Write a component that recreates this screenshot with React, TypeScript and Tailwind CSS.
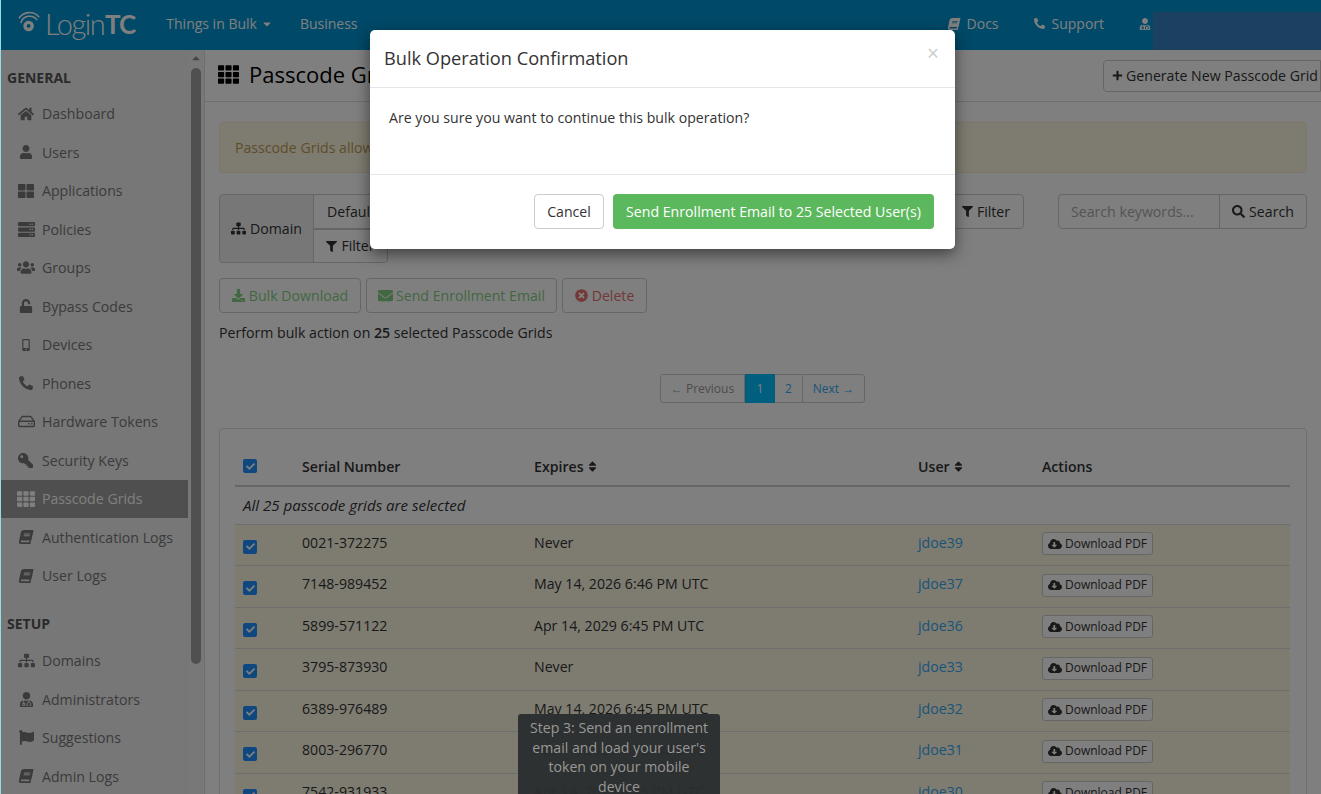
import {
  FaHome, FaUser, FaThLarge, FaServer, FaUsers, FaUnlock, FaMobileAlt, FaPhoneAlt, FaRegHdd, FaKey, FaTh, FaBook,
  FaSitemap, FaUserMd, FaFlag, FaCaretDown, FaCaretUp, FaSort, FaFilter, FaPlus, FaSearch, FaDownload, FaEnvelope,
  FaTimesCircle, FaCloudDownloadAlt, FaCheck,
} from 'react-icons/fa';

const general = [
  { label: 'Dashboard', icon: FaHome, cls: 'text-[16px]' },
  { label: 'Users', icon: FaUser, cls: 'text-[14px]' },
  { label: 'Applications', icon: FaThLarge, cls: 'text-[16px]' },
  { label: 'Policies', icon: FaServer, cls: 'text-[17px]' },
  { label: 'Groups', icon: FaUsers, cls: 'text-[19px]' },
  { label: 'Bypass Codes', icon: FaUnlock, cls: 'text-[14px]' },
  { label: 'Devices', icon: FaMobileAlt, cls: 'text-[12px]' },
  { label: 'Phones', icon: FaPhoneAlt, cls: 'text-[14px]' },
  { label: 'Hardware Tokens', icon: FaRegHdd, cls: 'text-[17px]' },
  { label: 'Security Keys', icon: FaKey, cls: 'text-[15px] -scale-x-100' },
  { label: 'Passcode Grids', icon: FaTh, cls: 'text-[18px]', active: true },
  { label: 'Authentication Logs', icon: FaBook, cls: 'text-[14px] -skew-x-12' },
  { label: 'User Logs', icon: FaBook, cls: 'text-[14px] -skew-x-12' },
];

const setup = [
  { label: 'Domains', icon: FaSitemap, cls: 'text-[17px]' },
  { label: 'Administrators', icon: FaUserMd, cls: 'text-[15px]' },
  { label: 'Suggestions', icon: FaFlag, cls: 'text-[15px]' },
  { label: 'Admin Logs', icon: FaBook, cls: 'text-[14px] -skew-x-12' },
];

const rows = [
  ['0021-372275', 'Never', 'jdoe39'],
  ['7148-989452', 'May 14, 2026 6:46 PM UTC', 'jdoe37'],
  ['5899-571122', 'Apr 14, 2029 6:45 PM UTC', 'jdoe36'],
  ['3795-873930', 'Never', 'jdoe33'],
  ['6389-976489', 'May 14, 2026 6:45 PM UTC', 'jdoe32'],
  ['8003-296770', 'Apr 14, 2029 6:45 PM UTC', 'jdoe31'],
  ['7542-931933', 'Apr 14, 2029 6:45 PM UTC', 'jdoe30'],
];

function Check() {
  return (
    <span className="flex h-[14px] w-[14px] items-center justify-center rounded-[2px] bg-[#1e90ff] text-white">
      <FaCheck className="text-[9px]" />
    </span>
  );
}

function SideItem({ item }: { item: any }) {
  const Icon = item.icon;
  return (
    <div className={`flex h-[38.5px] items-center pl-[16px] ${item.active ? 'bg-[#9e9e9e] text-[#fff]' : 'text-[#777]'}`}>
      <span className={`flex w-[18px] justify-center ${item.cls}`}><Icon /></span>
      <span className="ml-[7px]">{item.label}</span>
    </div>
  );
}

export default function App() {
  return (
    <div className="relative flex h-[794px] flex-col overflow-hidden bg-white font-['Open_Sans',sans-serif] text-[14.15px] text-[#333]">
      <header className="flex h-[50px] shrink-0 items-center bg-[#0092d0] pb-[3px] pl-[18px] text-white">
        <svg viewBox="0 0 26 26" className="h-[26px] w-[25px]" fill="none" stroke="currentColor">
          <circle cx="11" cy="15" r="5.5" fill="currentColor" stroke="none" />
          <circle cx="11" cy="15" r="2" fill="#0092d0" stroke="none" />
          <path d="M3 12 A 9.5 9.5 0 0 1 20 9" strokeWidth="1.6" />
          <path d="M1 7 A 13 13 0 0 1 22 6" strokeWidth="1.6" />
        </svg>
        <span className="ml-[2px] font-['Lato',sans-serif] text-[29px] leading-none font-light tracking-[-1.5px]">Login</span>
        <span className="ml-[1px] font-['Lato',sans-serif] text-[26px] leading-none font-bold tracking-[-1px]">TC</span>
        <span className="ml-[31px] flex items-center gap-1 text-[14px]">Things in Bulk <FaCaretDown className="text-xs" /></span>
        <span className="ml-[27px] text-[14px]">Business</span>
        <span className="ml-[590px] flex items-center gap-[7px] text-[14px]"><FaBook className="-skew-x-12 text-xs" />Docs</span>
        <span className="ml-[35px] flex items-center gap-[7px] text-[14px]"><FaPhoneAlt className="text-[11px]" />Support</span>
        <FaUserMd className="ml-[35px] text-xs" />
        <div className="-mb-[3px] ml-[2px] h-[38px] flex-1 self-end bg-[#3680c0]" />
      </header>

      <div className="flex min-h-0 flex-1">
        <aside className="flex w-[205px] shrink-0 border-r border-[#ddd] bg-[#f0f0f0]">
          <div className="w-[188px] shrink-0 bg-[#eee] pl-px">
            <div className="flex h-[44.5px] items-end pb-[7px] pl-[6px] text-[14px] font-bold text-[#555]">GENERAL</div>
            {general.map((item) => <SideItem key={item.label} item={item} />)}
            <div className="flex h-[46.5px] items-end pb-2 pl-[6px] text-[14px] font-bold text-[#555]">SETUP</div>
            {setup.map((item) => <SideItem key={item.label} item={item} />)}
          </div>
          <div className="flex flex-1 flex-col items-center">
            <FaCaretUp className="mt-[2px] text-[12px] text-[#888]" />
            <div className="mt-[4px] h-[596px] w-[10px] rounded-full bg-[#a0a0a0]" />
          </div>
        </aside>

        <main className="min-w-0 flex-1">
          <div className="flex h-[52px] items-center justify-between border-b border-[#ddd] pl-[13px]">
            <h1 className="flex items-center gap-[10px] pb-[2px] text-[22px] font-normal text-black"><FaTh className="text-[21px]" />Passcode Grids</h1>
            <button className="flex h-[32px] w-[218px] shrink-0 items-center gap-[3px] self-center overflow-hidden rounded-l-[4px] border border-[#ccc] pl-2 whitespace-nowrap"><FaPlus className="shrink-0 text-[11px]" />Generate New Passcode Grid</button>
          </div>

          <div className="pr-[14px] pl-[14px]">
            <div className="mt-[20px] flex h-[51px] items-center rounded-[4px] border border-[#faebcc] bg-[#fcf8e3] pl-[15px] text-[#c09a50]">Passcode Grids allow</div>

            <div className="mt-[21px] flex h-[69px] items-start">
              <div className="flex h-[69px] w-[95px] items-center justify-center gap-1 rounded-l-[4px] border border-[#ccc] bg-[#eee]"><FaSitemap className="text-[15px]" />Domain</div>
              <div className="w-[74px]">
                <div className="flex h-[35px] items-center border-y border-[#ccc] pl-[13px]">Default</div>
                <button className="-ml-px flex h-[34px] w-[75px] items-center justify-center gap-1 rounded-br-[4px] border border-[#ccc] border-t-[#ccc]"><FaFilter className="text-[11px]" />Filter</button>
              </div>
              <button className="ml-auto flex h-[35px] w-[76px] items-center justify-center gap-1 rounded-[4px] border border-[#ccc]"><FaFilter className="text-[11px]" />Filter</button>
              <div className="ml-[34px] flex h-[35px] w-[162px] items-center rounded-l-[4px] border border-[#ccc] pl-3 text-[#aaa]">Search keywords...</div>
              <button className="-ml-px flex h-[35px] w-[88px] items-center justify-center gap-1 rounded-r-[4px] border border-[#ccc]"><FaSearch className="text-[13px]" />Search</button>
            </div>

            <div className="mt-[15px] flex gap-[5px]">
              <button className="flex h-[35px] w-[142px] items-center justify-center gap-1 rounded-[4px] border border-[#ccc] text-[#85d085]"><FaDownload className="text-[13px]" />Bulk Download</button>
              <button className="flex h-[35px] w-[191px] items-center justify-center gap-[3px] rounded-[4px] border border-[#ccc] text-[#85d085]"><FaEnvelope className="text-[15px]" />Send Enrollment Email</button>
              <button className="flex h-[35px] w-[85px] items-center justify-center gap-1 rounded-[4px] border border-[#ccc] text-[#e87070]"><FaTimesCircle className="text-[13px]" />Delete</button>
            </div>
            <p className="mt-[9px]">Perform bulk action on <b className="font-semibold">25</b> selected Passcode Grids</p>

            <div className="mt-[31px] flex justify-center pr-[1px] text-xs">
              <div className="flex h-[29px]">
                <span className="flex w-[85px] items-center justify-center rounded-l-[3px] border border-[#ccc] text-[#999]">← Previous</span>
                <span className="flex w-[30px] items-center justify-center bg-[#00beff] text-white">1</span>
                <span className="flex w-[27px] items-center justify-center border-y border-[#ccc] text-[#35a8f0]">2</span>
                <span className="flex w-[63px] items-center justify-center rounded-r-[3px] border border-[#ccc] text-[#35a8f0]">Next →</span>
              </div>
            </div>

            <div className="mt-[25px] rounded-t-[4px] border border-[#ddd] px-[15px] pt-[18px]">
              <table className="w-[1055px] table-fixed border-collapse">
                <thead>
                  <tr className="h-[39px] border-b-2 border-[#ccc] text-left">
                    <th className="w-[59px] pl-2"><Check /></th>
                    <th className="w-[232px] pl-2 font-semibold">Serial Number</th>
                    <th className="w-[384px] pl-2 font-semibold"><span className="flex items-center gap-[2px]">Expires <FaSort className="text-[13px]" /></span></th>
                    <th className="w-[124px] pl-2 font-semibold"><span className="flex items-center gap-[2px]">User <FaSort className="text-[13px]" /></span></th>
                    <th className="w-[256px] pl-2 font-semibold">Actions</th>
                  </tr>
                </thead>
                <tbody>
                  <tr className="h-[38px] border-b border-[#ddd]"><td colSpan={5} className="pl-2 text-[15.1px] italic">All 25 passcode grids are selected</td></tr>
                  {rows.map((r) => (
                    <tr key={r[0]} className="h-[41.5px] border-b border-[#ddd] bg-[#fcf8e3]">
                      <td className="pl-2"><span className="mt-[4px] block"><Check /></span></td>
                      <td className="pb-[5px] pl-2">{r[0]}</td>
                      <td className="pb-[5px] pl-2">{r[1]}</td>
                      <td className="pb-[5px] pl-2 text-[#35a8f0]">{r[2]}</td>
                      <td className="pb-[2px] pl-2">
                        <button className="flex h-[23px] w-[111px] items-center justify-center gap-[3px] rounded-[3px] border border-[#ccc] bg-white text-xs"><FaCloudDownloadAlt className="text-[14px]" />Download PDF</button>
                      </td>
                    </tr>
                  ))}
                </tbody>
              </table>
            </div>
          </div>
        </main>
      </div>

      <div className="absolute inset-0 bg-black/50" />
      <div className="absolute inset-y-0 left-0 w-px bg-[#8fdfe8]" />

      <div className="absolute top-[714px] left-[518px] w-[202px] rounded-[3px] bg-[#2a2d2d]/95 px-[11px] pt-[4px] pb-2 text-center leading-[19.6px] text-[#989898]">
        Step 3: Send an enrollment email and load your user's token on your mobile device
      </div>

      <div className="absolute top-[30px] left-[370px] w-[585px] rounded-[5px] bg-white shadow-[0_5px_15px_rgba(0,0,0,0.5)]">
        <div className="flex h-[58px] items-start justify-between border-b border-[#e5e5e5] pr-[15px] pl-[14px]">
          <h4 className="mt-[15px] text-[18.2px] text-[#333]">Bulk Operation Confirmation</h4>
          <span className="mt-[10px] mr-[1px] text-[21px] leading-[26px] text-[#ccc]">×</span>
        </div>
        <div className="h-[86px] pt-[19px] pl-[19px]">Are you sure you want to continue this bulk operation?</div>
        <div className="flex h-[75px] justify-end gap-[9px] border-t border-[#e5e5e5] pt-[19px] pr-[21px]">
          <button className="h-[35px] w-[70px] rounded-[4px] border border-[#ccc] bg-white">Cancel</button>
          <button className="h-[35px] w-[321px] rounded-[4px] bg-[#5cb85c] text-white">Send Enrollment Email to 25 Selected User(s)</button>
        </div>
      </div>
    </div>
  );
}
